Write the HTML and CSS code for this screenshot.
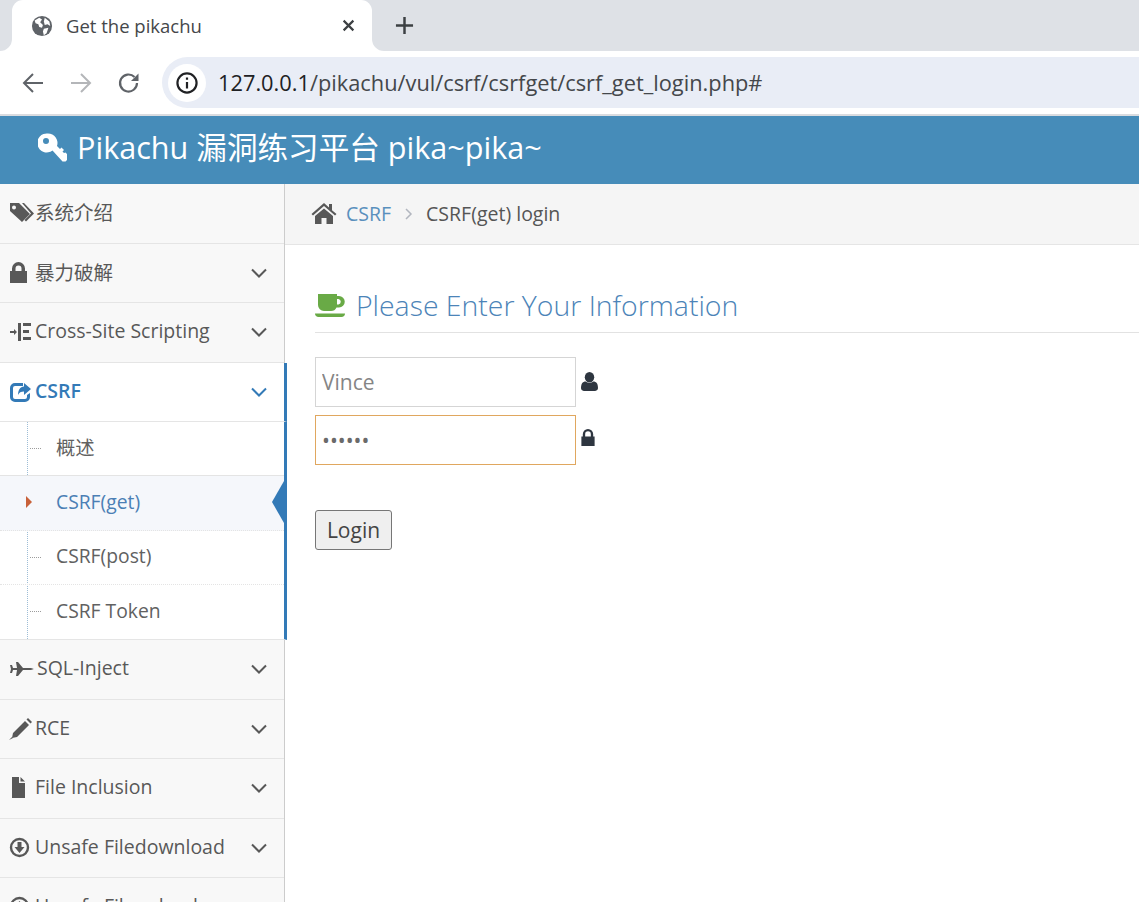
FILE: index.html
```html
<!DOCTYPE html>
<html>
<head>
    <title>Get the pikachu</title>
    <link rel="stylesheet" href="styles.css">
</head>
<body>
    <div class="tabstrip">
        <div class="tab">
            <svg class="tab-globe" viewBox="0 0 24 24"><circle cx="12" cy="12" r="11" fill="#5f6368"/><path d="M4 6l5-3 3 2-2 3 3 3-1 3-3-1-1-3-3-1zM15 3l5 4 1 5-3-2-3 1-1-4zM14 15l5-1-2 6-3 2-1-4z" fill="#fff"/></svg>
            <span class="tab-title">Get the pikachu</span>
            <svg class="tab-close" viewBox="0 0 12 12"><path d="M1.500 1.500l9 9M10.500 1.500l-9 9" stroke="#3c4043" stroke-width="2" fill="none"/></svg>
        </div>
        <svg class="tab-new" viewBox="0 0 20 20"><path d="M10 1v18M1 10h18" stroke="#3c4043" stroke-width="2.600" fill="none"/></svg>
    </div>
    <div class="toolbar">
        <svg class="nav-btn" viewBox="0 0 24 24"><path d="M22 12H4M12 3l-9 9 9 9" stroke="#5f6368" stroke-width="2" fill="none"/></svg>
        <svg class="nav-btn" viewBox="0 0 24 24"><path d="M2 12h18M12 3l9 9-9 9" stroke="#b4b6b9" stroke-width="2" fill="none"/></svg>
        <svg class="nav-btn" viewBox="0 0 24 24"><path d="M20 12a8.500 8.500 0 1 1-2.500-6" stroke="#5f6368" stroke-width="2.200" fill="none"/><path d="M21.500 2.500v7.500h-7.500z" fill="#5f6368"/></svg>
        <div class="omnibox">
            <span class="info-badge">
                <svg viewBox="0 0 20 20"><circle cx="10" cy="10" r="8.700" stroke="#202124" stroke-width="2" fill="none"/><path d="M9 9h2v6H9zM9 5h2v2H9z" fill="#202124"/></svg>
            </span>
            <span class="url"><span class="url-host">127.0.0.1</span>/pikachu/vul/csrf/csrfget/csrf_get_login.php#</span>
        </div>
    </div>

    <div class="navbar">
        <svg class="brand-key" viewBox="0 0 30 30"><path d="M10 .5a9.500 9.500 0 0 1 9 12.500l3 3 1.500-1.500 2.500 2.500-1.500 1.500 1.500 1.500 1.500-.5 1.500 1.500V27l-1.500 1.500h-3l-10-11A9.500 9.500 0 1 1 10 .5zM8 5a3 3 0 1 0 0 6 3 3 0 0 0 0-6z" fill="#fff" fill-rule="evenodd"/></svg>
        <span class="brand-text">Pikachu 漏洞练习平台 pika~pika~</span>
    </div>

    <div class="layout">
        <ul class="sidebar">
            <li class="menu-item">
                <svg class="menu-icon" viewBox="0 0 26 22"><path d="M1 1h9l11 11-8 8L1 9zM5 3.500a2 2 0 1 0 0 4 2 2 0 0 0 0-4z" fill="#585858" fill-rule="evenodd"/><path d="M13 1h2l10 10.500-8 8-1.500-1.500 6.500-6.500z" fill="#585858"/></svg>
                <span class="menu-label">系统介绍</span>
            </li>
            <li class="menu-item">
                <svg class="menu-icon" viewBox="0 0 26 22"><path d="M1 9h2V6.500a6.500 6.500 0 0 1 13 0V9h2v12H1zM6.500 9h6V6.500a3 3 0 0 0-6 0z" fill="#585858" fill-rule="evenodd"/></svg>
                <span class="menu-label">暴力破解</span>
                <svg class="chevron" viewBox="0 0 16 10"><path d="M1 1.500l7 7 7-7" stroke="#585858" stroke-width="2" fill="none"/></svg>
            </li>
            <li class="menu-item">
                <svg class="menu-icon" viewBox="0 0 26 22"><path d="M1 10h5v2H1zM5 8l3 3-3 3zM9 2h3v18H9zM14 2h8v3h-8zM14 9h6v3h-6zM14 16h8v3h-8z" fill="#585858"/></svg>
                <span class="menu-label">Cross-Site Scripting</span>
                <svg class="chevron" viewBox="0 0 16 10"><path d="M1 1.500l7 7 7-7" stroke="#585858" stroke-width="2" fill="none"/></svg>
            </li>
            <li class="menu-item is-open">
                <svg class="menu-icon" viewBox="0 0 26 22"><path d="M5 2h8v3H5a2 2 0 0 0-2 2v9a2 2 0 0 0 2 2h10a2 2 0 0 0 2-2v-2l3-2v4a5 5 0 0 1-5 5H5a5 5 0 0 1-5-5V7a5 5 0 0 1 5-5z" fill="#337ab7" transform="translate(1 0)"/><path d="M15 2l7 6-7 6v-3.500c-3 0-5 1-6 3.500 0-5 2-8 6-8.500z" fill="#337ab7"/></svg>
                <span class="menu-label">CSRF</span>
                <svg class="chevron" viewBox="0 0 16 10"><path d="M1 1.500l7 7 7-7" stroke="#337ab7" stroke-width="2" fill="none"/></svg>
            </li>
            <li class="submenu">
                <ul>
                    <li class="sub-item">概述</li>
                    <li class="sub-item is-active">CSRF(get)</li>
                    <li class="sub-item">CSRF(post)</li>
                    <li class="sub-item">CSRF Token</li>
                </ul>
            </li>
            <li class="menu-item">
                <svg class="menu-icon" viewBox="0 0 26 22"><path d="M1 7h2l1 3h4L7 4h2l5 6h6c2 0 4 .5 5 1-1 .5-3 1-5 1h-6l-5 6H7l1-6H4l-1 3H1l1-4z" fill="#585858"/></svg>
                <span class="menu-label plane">SQL-Inject</span>
                <svg class="chevron" viewBox="0 0 16 10"><path d="M1 1.500l7 7 7-7" stroke="#585858" stroke-width="2" fill="none"/></svg>
            </li>
            <li class="menu-item">
                <svg class="menu-icon" viewBox="0 0 26 22"><path d="M16 3l4 4L8 19l-5 1 1-5zM17.500 1.500L19 0l4 4-1.500 1.500z" fill="#585858"/><path d="M0 22l3-3 1 1z" fill="#585858"/></svg>
                <span class="menu-label">RCE</span>
                <svg class="chevron" viewBox="0 0 16 10"><path d="M1 1.500l7 7 7-7" stroke="#585858" stroke-width="2" fill="none"/></svg>
            </li>
            <li class="menu-item">
                <svg class="menu-icon" viewBox="0 0 26 22"><path d="M3 0h7v6h6v15H3zM11.500 0l4.500 4.500h-4.500z" fill="#585858"/></svg>
                <span class="menu-label">File Inclusion</span>
                <svg class="chevron" viewBox="0 0 16 10"><path d="M1 1.500l7 7 7-7" stroke="#585858" stroke-width="2" fill="none"/></svg>
            </li>
            <li class="menu-item">
                <svg class="menu-icon" viewBox="0 0 26 22"><circle cx="10.500" cy="10.500" r="8.500" stroke="#585858" stroke-width="2.400" fill="none"/><path d="M8.500 5h4v5h3l-5 6-5-6h3z" fill="#585858"/></svg>
                <span class="menu-label">Unsafe Filedownload</span>
                <svg class="chevron" viewBox="0 0 16 10"><path d="M1 1.500l7 7 7-7" stroke="#585858" stroke-width="2" fill="none"/></svg>
            </li>
            <li class="menu-item">
                <svg class="menu-icon" viewBox="0 0 26 22"><circle cx="10.500" cy="10.500" r="8.500" stroke="#585858" stroke-width="2.400" fill="none"/><path d="M8.500 16h4v-5h3l-5-6-5 6h3z" fill="#585858"/></svg>
                <span class="menu-label">Unsafe Fileupload</span>
            </li>
        </ul>

        <div class="main">
            <div class="breadcrumbs">
                <svg class="home-icon" viewBox="0 0 26 22"><path d="M13 1l5 4.500V2h3v6.300L25.500 12l-1.500 1.500L13 4 2 13.500.5 12z" fill="#585858"/><path d="M4 14l9-7.500 9 7.500v8h-6.500v-6h-5v6H4z" fill="#585858"/></svg>
                <a class="crumb-link">CSRF</a>
                <svg class="crumb-sep" viewBox="0 0 8 12"><path d="M1 1l5 5-5 5" stroke="#b2b6bf" stroke-width="1.500" fill="none"/></svg>
                <span class="crumb-current">CSRF(get) login</span>
            </div>
            <div class="content">
                <h2 class="form-title">
                    <svg class="coffee-icon" viewBox="0 0 30 25"><path d="M3 1h19v2h2a5 5 0 0 1 0 11.500h-2.500A6 6 0 0 1 16 18H9a6 6 0 0 1-6-6zM22 6v5.500h1.500a2.800 2.800 0 0 0 0-5.500z" fill="#69aa46" fill-rule="evenodd"/><path d="M0 20.500h30c0 2-1.500 3.500-3.500 3.500h-23C1.500 24 0 22.500 0 20.500z" fill="#69aa46"/></svg>
                    Please Enter Your Information
                </h2>
                <form class="login-form">
                    <div class="field">
                        <input class="text-input" type="text" placeholder="Vince">
                        <svg class="field-icon" viewBox="0 0 18 20"><ellipse cx="9" cy="5.500" rx="5" ry="5.500" fill="#2e3640"/><path d="M1 12c1-1.500 2.500-2 4-2 1 1 2.500 1.500 4 1.500s3-.5 4-1.500c1.500 0 3 .5 4 2 .7 1.500 1 3 1 5 0 1.500-1 3-3 3H3c-2 0-3-1.500-3-3 0-2 .3-3.500 1-5z" fill="#2e3640"/></svg>
                    </div>
                    <div class="field">
                        <input class="text-input is-focus" type="password" value="123456">
                        <svg class="field-icon lock" viewBox="0 0 14 18"><path d="M0 8h1.500V5.500a5.500 5.500 0 0 1 11 0V8H14v10H0zM4 8h6V5.500a3 3 0 0 0-6 0z" fill="#2e3640" fill-rule="evenodd"/></svg>
                    </div>
                    <button class="login-btn" type="button">Login</button>
                </form>
            </div>
        </div>
    </div>
</body>
</html>
```

FILE: styles.css
```css
* {
    box-sizing: border-box;
}
html, body {
    margin: 0;
    padding: 0;
    height: 902px;
    overflow: hidden;
    background-color: #fff;
    font-family: "Open Sans", "Noto Sans CJK SC", sans-serif;
    color: #585858;
}
ul {
    list-style: none;
    margin: 0;
    padding: 0;
}

/* browser frame */
.tabstrip {
    height: 51px;
    background-color: #dee1e6;
    padding-left: 12px;
    display: flex;
    align-items: center;
}
.tab {
    position: relative;
    width: 360px;
    height: 51px;
    background-color: #fff;
    border-radius: 11px 11px 0 0;
    padding: 0 17px 0 19px;
    display: flex;
    align-items: center;
}
.tab::before, .tab::after {
    content: "";
    position: absolute;
    bottom: 0;
    width: 12px;
    height: 12px;
    background-color: #fff;
}
.tab::before {
    left: -12px;
    clip-path: path("M12 0V12H0A12 12 0 0 0 12 0Z");
}
.tab::after {
    right: -12px;
    clip-path: path("M0 0V12H12A12 12 0 0 1 0 0Z");
}
.tab-globe {
    width: 22px;
    height: 22px;
    margin-right: 13px;
}
.tab-title {
    flex: 1;
    font-size: 18.500px;
    color: #45474a;
    margin-top: -1px;
}
.tab-close {
    width: 13px;
    height: 13px;
}
.tab-new {
    width: 19px;
    height: 19px;
    margin-left: 23px;
}
.toolbar {
    height: 65px;
    background-color: #fff;
    border-bottom: 2px solid #dadce0;
    padding: 6px 0 0 21px;
    display: flex;
    align-items: flex-start;
}
.nav-btn {
    width: 24px;
    height: 24px;
    margin: 14px 24px 0 0;
}
.nav-btn:nth-child(3) {
    margin-right: 21px;
}
.omnibox {
    flex: 1;
    height: 51px;
    background-color: #e9edf6;
    border-radius: 26px 0 0 26px;
    padding-left: 6px;
    display: flex;
    align-items: center;
}
.info-badge {
    width: 38px;
    height: 38px;
    border-radius: 50%;
    background-color: #fff;
    display: flex;
    align-items: center;
    justify-content: center;
}
.info-badge svg {
    width: 22px;
    height: 22px;
}
.url {
    margin: 0 0 1px 12px;
    font-size: 21.800px;
    color: #44474b;
    white-space: nowrap;
}
.url-host {
    color: #202124;
}

/* app header */
.navbar {
    height: 68px;
    background-color: #468cb9;
    padding: 0 0 5px 38px;
    display: flex;
    align-items: center;
}
.brand-key {
    width: 30px;
    height: 30px;
    margin-right: 9px;
}
.brand-text {
    font-size: 30.600px;
    color: #fff;
    white-space: nowrap;
    margin-top: -3px;
}

.layout {
    display: flex;
    height: 718px;
}

/* sidebar */
.sidebar {
    position: relative;
    width: 285px;
    flex: none;
    background-color: #f8f8f8;
    border-right: 1px solid #ccc;
}
.menu-item {
    height: 59.500px;
    padding: 0 17px 0 9px;
    border-bottom: 1px solid #e5e5e5;
    display: flex;
    align-items: center;
    font-size: 19.500px;
    color: #585858;
}
.menu-icon {
    width: 26px;
    height: 22px;
    flex: none;
}
.menu-label {
    flex: 1;
    white-space: nowrap;
    margin-bottom: 3px;
}
.menu-label.plane {
    margin-left: 2px;
}
.chevron {
    width: 16px;
    height: 10px;
    flex: none;
}
.menu-item.is-open {
    background-color: #fff;
    color: #337ab7;
    font-weight: 600;
    width: 287px;
    border-right: 3px solid #337ab7;
    padding-right: 17px;
}
.submenu {
    position: relative;
    width: 287px;
    background-color: #fff;
    border-right: 3px solid #337ab7;
    border-bottom: 1px solid #e5e5e5;
}
.submenu::before {
    content: "";
    position: absolute;
    left: 27px;
    top: 0;
    bottom: 0;
    border-left: 1px dotted #9dbdd6;
}
.sub-item {
    position: relative;
    height: 54.300px;
    padding: 0 0 3px 56px;
    border-bottom: 1px dotted #e4e4e4;
    display: flex;
    align-items: center;
    font-size: 19.300px;
    color: #616161;
}
.sub-item:first-child {
    border-bottom: 1px solid #e4e4e4;
}
.sub-item:last-child {
    border-bottom: none;
}
.sub-item::before {
    content: "";
    position: absolute;
    left: 30px;
    top: 26px;
    width: 11px;
    border-top: 1px dotted #9c9c9c;
}
.sub-item.is-active {
    background-color: #f5f7fb;
    color: #4b7fb5;
}
.sub-item.is-active::before {
    left: 26px;
    top: 20px;
    width: 0;
    border: 0;
    border-left: 6px solid #c86139;
    border-top: 6px solid transparent;
    border-bottom: 6px solid transparent;
}
.sub-item.is-active::after {
    content: "";
    position: absolute;
    right: 0;
    top: 5px;
    border-right: 12px solid #337ab7;
    border-top: 21px solid transparent;
    border-bottom: 21px solid transparent;
}

/* main column */
.main {
    flex: 1;
    min-width: 0;
}
.breadcrumbs {
    height: 61px;
    background-color: #f5f5f5;
    border-bottom: 1px solid #e5e5e5;
    padding: 0 0 2px 26px;
    display: flex;
    align-items: center;
    font-size: 19.500px;
}
.home-icon {
    width: 26px;
    height: 22px;
    margin-right: 9px;
}
.crumb-link {
    color: #5a90bd;
}
.crumb-sep {
    width: 8px;
    height: 12px;
    margin: 2px 13px 0 14px;
}
.crumb-current {
    color: #555;
}
.content {
    padding: 40px 0 0 30px;
}
.form-title {
    margin: 0 0 24px;
    padding-bottom: 7px;
    border-bottom: 1px solid #e2e2e2;
    display: flex;
    align-items: center;
    font-size: 28.400px;
    font-weight: 300;
    color: #4c84b8;
    white-space: nowrap;
    line-height: 40px;
}
.coffee-icon {
    width: 30px;
    height: 25px;
    margin-right: 11px;
}
.field {
    display: flex;
    align-items: center;
    margin-bottom: 8px;
}
.text-input {
    width: 261px;
    height: 50px;
    border: 1px solid #d5d5d5;
    border-radius: 0;
    padding: 0 6px 1px;
    font-family: inherit;
    font-size: 21px;
    color: #6a6a6a;
    background-color: #fff;
    outline: none;
}
.text-input::placeholder {
    color: #858585;
    opacity: 1;
}
.text-input.is-focus {
    border-color: #e0a75f;
}
.field-icon {
    width: 17px;
    height: 19px;
    margin: 0 0 1px 5px;
}
.field-icon.lock {
    width: 14px;
    height: 17px;
    margin: 0 0 6px 5px;
}
.login-btn {
    display: block;
    margin-top: 45px;
    width: 77px;
    height: 40px;
    padding: 0 0 1px;
    background-color: #efefef;
    border: 1px solid #767676;
    border-radius: 3px;
    font-family: inherit;
    font-size: 21px;
    color: #444;
}
```
